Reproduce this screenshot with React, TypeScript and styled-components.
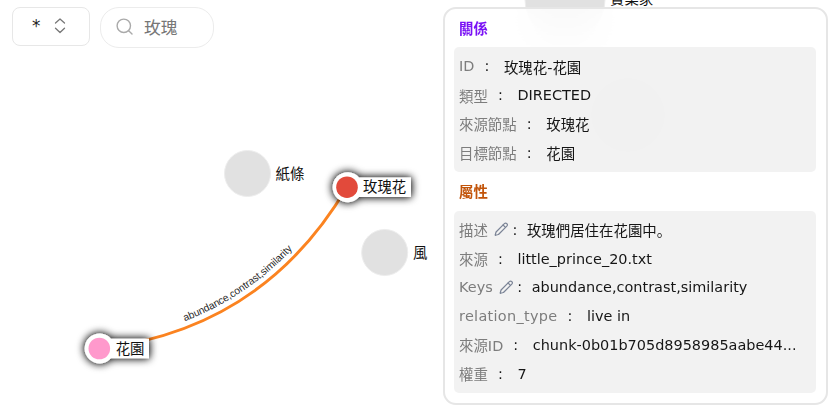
import React from "react";
import styled, { createGlobalStyle } from "styled-components";

const GlobalStyle = createGlobalStyle`
  * { box-sizing: border-box; }
  body {
    margin: 0;
    background: #fff;
    overflow: hidden;
    font-family: "DejaVu Sans", "Noto Sans CJK SC", sans-serif;
  }
`;

const Viewer = styled.main`
  position: relative;
  width: 835px;
  height: 411px;
  overflow: hidden;
  background: #fff;
  color: #161616;
  font-size: 14.45px;
`;

const Graph = styled.svg`
  position: absolute;
  inset: 0;
  display: block;
`;

const NodeText = styled.text`
  font: 14.4px "Liberation Sans", "Noto Sans CJK SC", sans-serif;
  fill: #111;
`;

const EdgeText = styled.text`
  font: 10.3px "Liberation Sans", sans-serif;
  fill: #2a2a2a;
`;

const Toolbar = styled.header`
  position: relative;
  display: flex;
  align-items: flex-start;
  gap: 10px;
  padding: 7px 0 0 12px;
  width: 230px;
`;

const LabelSelect = styled.button`
  display: flex;
  align-items: center;
  justify-content: space-between;
  width: 78px;
  height: 38.5px;
  padding: 0 23px 0 19px;
  border: 1px solid #e7e7e7;
  border-radius: 8px;
  background: #fff;
  color: #222;
  font: 16.8px "DejaVu Sans", sans-serif;
`;

const SearchBox = styled.div`
  display: flex;
  align-items: center;
  gap: 11px;
  width: 114px;
  height: 41px;
  padding: 0 0 2px 15px;
  border: 1px solid #ececec;
  border-radius: 19px;
  background: #fff;
  color: #777;
  font-size: 16.8px;
`;

const Panel = styled.aside`
  position: absolute;
  left: 442.5px;
  top: 7px;
  width: 385px;
  height: 398px;
  padding: 8px 9.5px 0;
  border: 2px solid #e6e6e6;
  border-radius: 13px;
  background: rgba(255, 255, 255, 0.8);
  backdrop-filter: blur(19px);
`;

const Title = styled.h3<{ $color: string }>`
  margin: 0;
  padding-left: 5px;
  height: 30.4px;
  line-height: 24px;
  font-size: 14.4px;
  font-weight: 700;
  color: ${(p) => p.$color};
`;

const Section = styled.section<{ $bottom: number }>`
  margin-bottom: ${(p) => p.$bottom}px;
  padding: 4.6px 5px 5.2px;
  border-radius: 5px;
  background: rgba(236, 236, 236, 0.67);
`;

const Row = styled.div`
  display: flex;
  align-items: center;
  height: 28.8px;
  white-space: nowrap;
`;

const Name = styled.span<{ $spacing?: number }>`
  color: #7d7d7d;
  letter-spacing: ${(p) => p.$spacing ?? 0}px;
`;

const Colon = styled.span<{ $tight?: boolean }>`
  width: ${(p) => (p.$tight ? 18.5 : 29.5)}px;
  padding-left: ${(p) => (p.$tight ? 4 : 10)}px;
`;

const PencilIcon = styled.svg`
  margin-left: 6px;
  flex: none;
`;

const Pencil = () => (
  <PencilIcon width="14.5" height="14.5" viewBox="0 0 24 24" fill="none" stroke="#7b8496" strokeWidth="2" strokeLinecap="round" strokeLinejoin="round">
    <path d="M21.2 6.8a2.8 2.8 0 0 0-4-4L3.8 16.2a2 2 0 0 0-.5.8L2 21.4a.5.5 0 0 0 .6.6L7 20.7a2 2 0 0 0 .8-.5z" />
    <path d="m15 5 4 4" />
  </PencilIcon>
);

type Property = { name: string; value: string; editable?: boolean; spacing?: number };

const relation: Property[] = [
  { name: "ID", value: "玫瑰花-花園" },
  { name: "類型", value: "DIRECTED" },
  { name: "來源節點", value: "玫瑰花" },
  { name: "目標節點", value: "花園" },
];

const properties: Property[] = [
  { name: "描述", value: "玫瑰們居住在花園中。", editable: true },
  { name: "來源", value: "little_prince_20.txt" },
  { name: "Keys", value: "abundance,contrast,similarity", editable: true },
  { name: "relation_type", value: "live in", spacing: 0.3 },
  { name: "來源ID", value: "chunk-0b01b705d8958985aabe44..." },
  { name: "權重", value: "7" },
];

const PropertyRow = ({ name, value, editable, spacing }: Property) => (
  <Row>
    <Name $spacing={spacing}>{name}</Name>
    {editable && <Pencil />}
    <Colon $tight={editable}>:</Colon>
    <span>{value}</span>
  </Row>
);

export default function App() {
  return (
    <>
      <GlobalStyle />
      <Viewer>
        <Graph width="835" height="411" viewBox="0 0 835 411">
          <defs>
            <filter id="glow" x="-40%" y="-60%" width="180%" height="220%">
              <feDropShadow dx="0" dy="0" stdDeviation="4" floodColor="#000" floodOpacity="1" />
              <feDropShadow dx="0" dy="0" stdDeviation="2" floodColor="#000" floodOpacity="0.3" />
            </filter>
          </defs>
          <g fill="#e1e1e1" stroke="#ededed" strokeWidth="1">
            <circle cx="247.5" cy="173.5" r="23" />
            <circle cx="384.7" cy="252.5" r="23" />
            <circle cx="565" cy="0" r="40" />
            <circle cx="628" cy="115" r="39" />
          </g>
          <NodeText x="275.5" y="179">紙條</NodeText>
          <NodeText x="413" y="258">風</NodeText>
          <NodeText x="610" y="4">實業家</NodeText>
          <path id="edge" d="M99.3 348.5Q263 329.5 347 187" fill="none" stroke="#fb8320" strokeWidth="2.9" />
          <EdgeText dy="-6.5" textAnchor="middle">
            <textPath href="#edge" startOffset="51.2%">abundance,contrast,similarity</textPath>
          </EdgeText>
          <path filter="url(#glow)" fill="#fff" d="M359 177.5H411V197H359A15 15 0 1 1 359 177.5Z" />
          <circle cx="347" cy="187.2" r="10.8" fill="#e24a3b" />
          <NodeText x="363" y="192.3">玫瑰花</NodeText>
          <path filter="url(#glow)" fill="#fff" d="M111 338.7H149V358.2H111A15 15 0 1 1 111 338.7Z" />
          <circle cx="99.3" cy="348.5" r="10.8" fill="#ff99cc" />
          <NodeText x="115.7" y="353.5">花園</NodeText>
        </Graph>
        <Toolbar>
          <LabelSelect>
            <span>*</span>
            <svg width="12" height="16" viewBox="0 0 12 16" fill="none" stroke="#777" strokeWidth="1.3" strokeLinecap="round" strokeLinejoin="round">
              <path d="m1.5 5 4.5-4 4.5 4M1.5 10.2 6 14.5l4.5-4.3" />
            </svg>
          </LabelSelect>
          <SearchBox>
            <svg width="17" height="17" viewBox="0 0 17 17" fill="none" stroke="#aaa" strokeWidth="1.4" strokeLinecap="round">
              <circle cx="7.8" cy="7.8" r="6.7" />
              <path d="m12.7 12.7 3.3 3.3" />
            </svg>
            <span>玫瑰</span>
          </SearchBox>
        </Toolbar>
        <Panel>
          <Title $color="#7a12f5">關係</Title>
          <Section $bottom={8}>
            {relation.map((p) => (
              <PropertyRow key={p.name} {...p} />
            ))}
          </Section>
          <Title $color="#c2540a">屬性</Title>
          <Section $bottom={0}>
            {properties.map((p) => (
              <PropertyRow key={p.name} {...p} />
            ))}
          </Section>
        </Panel>
      </Viewer>
    </>
  );
}
